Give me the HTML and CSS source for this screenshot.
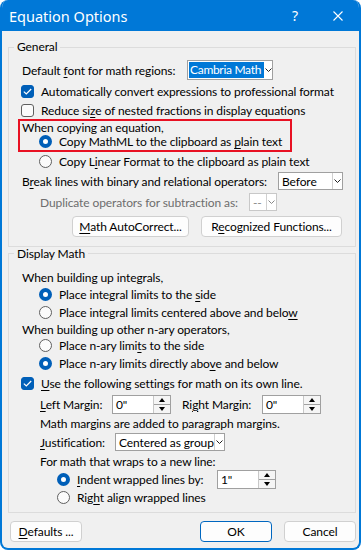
FILE: index.html
```html
<!DOCTYPE html>
<html>
<head>
    <title>Equation Options</title>
    <link rel="stylesheet" href="styles.css">
</head>
<body>
    <div class="window">
        <div class="titlebar">
            <span class="title">Equation Options</span>
            <span class="title-btn help">?</span>
            <span class="title-btn close">
                <svg width="10" height="10" viewBox="0 0 10 10"><path d="M0.5 0.5L9.5 9.5M9.5 0.5L0.5 9.5" stroke="#fff" stroke-width="1.1" fill="none"/></svg>
            </span>
        </div>
        <div class="content">
            <fieldset class="group general">
                <legend>General</legend>
                <div class="group-body">
                    <div class="row row-font">
                        <span class="label label-font">Default <u>f</u>ont for math regions:</span>
                        <div class="combo combo-font">
                            <span class="combo-value selected">Cambria Math</span>
                            <span class="combo-arrow plain"><svg width="7" height="4" viewBox="0 0 7 4"><path d="M0.5 0.5L3.5 3.5L6.5 0.5" stroke="#222" fill="none"/></svg></span>
                        </div>
                    </div>
                    <div class="row row-auto">
                        <span class="check checked"><svg width="9" height="7" viewBox="0 0 9 7"><path d="M0.8 3.6L3.3 6L8.2 1" stroke="#fff" stroke-width="1.2" fill="none"/></svg></span>
                        <span>Automatically convert expressions to professional format</span>
                    </div>
                    <div class="row row-reduce">
                        <span class="check"></span>
                        <span>Reduce si<u>z</u>e of nested fractions in display equations</span>
                    </div>
                    <div class="highlight">
                        <div class="row row-when">When copying an equation,</div>
                        <div class="row row-mathml option">
                            <span class="radio checked"></span>
                            <span>Copy MathML to the clipboard as <u>p</u>lain text</span>
                        </div>
                    </div>
                    <div class="row row-linear option">
                        <span class="radio"></span>
                        <span>Copy L<u>i</u>near Format to the clipboard as plain text</span>
                    </div>
                    <div class="row row-break">
                        <span class="label label-break">B<u>r</u>eak lines with binary and relational operators:</span>
                        <div class="combo combo-break">
                            <span class="combo-value">Before</span>
                            <span class="combo-arrow"><svg width="7" height="4" viewBox="0 0 7 4"><path d="M0.5 0.5L3.5 3.5L6.5 0.5" stroke="#222" fill="none"/></svg></span>
                        </div>
                    </div>
                    <div class="row row-dup disabled">
                        <span class="label label-dup">Duplicate operators for subtraction as:</span>
                        <div class="combo combo-dup">
                            <span class="combo-value">--</span>
                            <span class="combo-arrow"><svg width="7" height="4" viewBox="0 0 7 4"><path d="M0.5 0.5L3.5 3.5L6.5 0.5" stroke="#888" fill="none"/></svg></span>
                        </div>
                    </div>
                    <div class="row row-buttons">
                        <button class="btn btn-autocorrect"><u>M</u>ath AutoCorrect...</button>
                        <button class="btn btn-functions">R<u>e</u>cognized Functions...</button>
                    </div>
                </div>
            </fieldset>

            <fieldset class="group display">
                <legend>Display Math</legend>
                <div class="group-body">
                    <div class="row r-integrals">When building up integrals,</div>
                    <div class="row r-int-side option">
                        <span class="radio checked"></span>
                        <span>Place integral limits to the <u>s</u>ide</span>
                    </div>
                    <div class="row r-int-center option">
                        <span class="radio"></span>
                        <span>Place integral limits centered above and belo<u>w</u></span>
                    </div>
                    <div class="row r-other">When building up other n-ary operators,</div>
                    <div class="row r-nary-side option">
                        <span class="radio"></span>
                        <span>Place n-ary limi<u>t</u>s to the side</span>
                    </div>
                    <div class="row r-nary-above option">
                        <span class="radio checked"></span>
                        <span>Place n-ary limits directly abo<u>v</u>e and below</span>
                    </div>
                    <div class="row r-use">
                        <span class="check checked"><svg width="9" height="7" viewBox="0 0 9 7"><path d="M0.8 3.6L3.3 6L8.2 1" stroke="#fff" stroke-width="1.2" fill="none"/></svg></span>
                        <span><u>U</u>se the following settings for math on its own line.</span>
                    </div>
                    <div class="row r-margins sub">
                        <span class="label label-left"><u>L</u>eft Margin:</span>
                        <div class="spin">
                            <span class="spin-value">0"</span>
                            <span class="spin-arrows"><span class="tri-up"></span><span class="tri-down"></span></span>
                        </div>
                        <span class="label label-right">Ri<u>g</u>ht Margin:</span>
                        <div class="spin">
                            <span class="spin-value">0"</span>
                            <span class="spin-arrows"><span class="tri-up"></span><span class="tri-down"></span></span>
                        </div>
                    </div>
                    <div class="row r-note sub">Math margins are added to paragraph margins.</div>
                    <div class="row r-just sub">
                        <span class="label label-just"><u>J</u>ustification:</span>
                        <div class="combo combo-just">
                            <span class="combo-value">Centered as group</span>
                            <span class="combo-arrow"><svg width="7" height="4" viewBox="0 0 7 4"><path d="M0.5 0.5L3.5 3.5L6.5 0.5" stroke="#222" fill="none"/></svg></span>
                        </div>
                    </div>
                    <div class="row r-wrap sub">For math that wraps to a new line:</div>
                    <div class="row r-indent wrap-option">
                        <span class="radio checked"></span>
                        <span class="label label-indent"><u>I</u>ndent wrapped lines by:</span>
                        <div class="spin">
                            <span class="spin-value">1"</span>
                            <span class="spin-arrows"><span class="tri-up"></span><span class="tri-down"></span></span>
                        </div>
                    </div>
                    <div class="row r-right wrap-option">
                        <span class="radio"></span>
                        <span>Rig<u>h</u>t align wrapped lines</span>
                    </div>
                </div>
            </fieldset>

            <div class="footer">
                <button class="btn btn-defaults"><u>D</u>efaults ...</button>
                <button class="btn btn-ok">OK</button>
                <button class="btn btn-cancel">Cancel</button>
            </div>
        </div>
    </div>
</body>
</html>
```

FILE: styles.css
```css
body {
    margin: 0;
    background-color: #fff;
    font-family: Lato, "Liberation Sans", sans-serif;
    font-size: 12px;
    letter-spacing: -0.1px;
    color: #000;
}

u {
    text-decoration-thickness: 1px;
    text-underline-offset: 2px;
}

.window {
    width: 357px;
    height: 548px;
    border: 2px solid #0078d7;
    border-top: none;
    border-radius: 8px 8px 8px 8px;
    background-color: #f0f0f0;
    overflow: hidden;
}

.titlebar {
    display: flex;
    align-items: center;
    height: 31px;
    background-color: #0078d7;
    color: #fff;
    font-family: "Noto Sans", sans-serif;
    letter-spacing: 0;
}

.title {
    padding-left: 7px;
    font-size: 14.5px;
    flex: 1;
}

.title-btn {
    display: flex;
    align-items: center;
    justify-content: center;
    height: 31px;
}

.help {
    width: 44px;
    font-size: 14px;
}

.close {
    width: 42px;
}

.content {
    padding: 9px 3px 0 6px;
}

.group {
    margin: 0;
    padding: 0;
    border: 1px solid #dcdcdc;
    min-width: 0;
}

.group legend {
    margin-left: 5px;
    padding: 0 3px;
    line-height: 14px;
}

.group-body {
    padding: 6px 0 0 13px;
}

.general .group-body {
    padding-bottom: 9px;
}

.display .group-body {
    padding-top: 9px;
    padding-bottom: 6px;
}

.display legend {
    line-height: 13px;
}

.row {
    display: flex;
    align-items: center;
    white-space: nowrap;
}

.option {
    padding-left: 17px;
}

.sub {
    padding-left: 18px;
}

.wrap-option {
    padding-left: 35px;
}

.label {
    flex: none;
    overflow: hidden;
}

/* general group rows */
.row-font { height: 20px; }
.row-auto { height: 22px; }
.row-reduce { height: 17px; }
.row-when { height: 12px; }
.row-mathml { height: 17px; }
.row-linear { height: 18px; }
.row-break { height: 22px; }
.row-dup { height: 20px; padding-left: 18px; }
.row-buttons { height: 21px; margin-top: 4px; padding-left: 50px; gap: 12px; }

.label-font { width: 165px; }
.label-break { width: 256px; }
.label-dup { width: 209px; }

.disabled {
    color: #6d6d6d;
}

.highlight {
    width: 268px;
    margin-left: -4px;
    padding-left: 2px;
    border: 2px solid #e81123;
}

/* display group rows */
.r-integrals { height: 16px; }
.r-int-side { height: 18px; }
.r-int-center { height: 19px; }
.r-other { height: 15px; }
.r-nary-side { height: 17px; }
.r-nary-above { height: 19px; }
.r-use { height: 20px; }
.r-margins { height: 22px; }
.r-note { height: 17px; }
.r-just { height: 20px; }
.r-wrap { height: 19px; }
.r-indent { height: 17px; }
.r-right { height: 18px; }

.label-left { width: 72px; }
.label-right { width: 80px; margin-left: 11px; }
.label-just { width: 75px; }
.label-indent { width: 140px; }

/* controls */
.check {
    flex: none;
    width: 11px;
    height: 11px;
    margin: 0 7px 0 -1px;
    border: 1px solid #5f5f5f;
    border-radius: 3px;
    background-color: #fbfbfb;
    display: flex;
    align-items: center;
    justify-content: center;
}

.check.checked {
    border-color: #005fb8;
    background-color: #005fb8;
}

.radio {
    flex: none;
    box-sizing: border-box;
    width: 13px;
    height: 13px;
    margin-right: 7px;
    border: 1px solid #5f5f5f;
    border-radius: 50%;
    background-color: #fbfbfb;
}

.radio.checked {
    border: 4px solid #005fb8;
    background-color: #fff;
}

.combo {
    flex: none;
    display: flex;
    align-items: center;
    box-sizing: border-box;
    border: 1px solid #a0a0a0;
    background-color: #fff;
}

.combo-value {
    flex: 1;
    min-width: 0;
    overflow: hidden;
    padding-left: 3px;
}

.combo-arrow {
    flex: none;
    display: flex;
    align-items: center;
    justify-content: center;
    width: 9px;
    height: 100%;
    border-left: 1px solid #d0d0d0;
}

.combo-arrow.plain {
    border-left: none;
    width: 8px;
}

.combo-font {
    width: 86px;
    height: 20px;
    padding: 1px 0 1px 1px;
}

.combo-font .combo-value {
    height: 16px;
    line-height: 16px;
    padding-left: 1px;
    letter-spacing: -0.3px;
}

.selected {
    background-color: #0078d7;
    color: #fff;
}

.combo-break {
    width: 65px;
    height: 18px;
}

.combo-dup {
    width: 28px;
    height: 18px;
    border-color: #c8c8c8;
    color: #8a8a8a;
}

.combo-just {
    width: 110px;
    height: 18px;
}

.spin {
    flex: none;
    display: flex;
    box-sizing: border-box;
    width: 59px;
    height: 19px;
    border: 1px solid #a0a0a0;
    background-color: #fff;
}

.spin-value {
    flex: 1;
    padding-left: 3px;
    line-height: 17px;
}

.spin-arrows {
    flex: none;
    display: flex;
    flex-direction: column;
    width: 16px;
    border-left: 1px solid #c8c8c8;
    background-color: #f5f5f5;
}

.tri-up,
.tri-down {
    flex: 1;
    display: flex;
    align-items: center;
    justify-content: center;
}

.tri-up {
    border-bottom: 1px solid #a0a0a0;
}

.tri-up::after {
    content: "";
    border-left: 3px solid transparent;
    border-right: 3px solid transparent;
    border-bottom: 4px solid #000;
}

.tri-down::after {
    content: "";
    border-left: 3px solid transparent;
    border-right: 3px solid transparent;
    border-top: 4px solid #000;
}

.btn {
    box-sizing: border-box;
    height: 21px;
    padding: 0;
    border: 1px solid #d0d0d0;
    border-radius: 4px;
    background-color: #fdfdfd;
    font-family: inherit;
    font-size: inherit;
    letter-spacing: inherit;
    color: #000;
}

.btn-autocorrect { width: 117px; }
.btn-functions { width: 141px; }

.footer {
    display: flex;
    align-items: center;
    padding: 8px 0 0 2px;
}

.btn-defaults { width: 72px; }
.btn-ok {
    width: 72px;
    margin-left: auto;
    border-color: #0067c0;
}
.btn-cancel {
    width: 72px;
    margin-left: 12px;
    margin-right: 0;
}
```
